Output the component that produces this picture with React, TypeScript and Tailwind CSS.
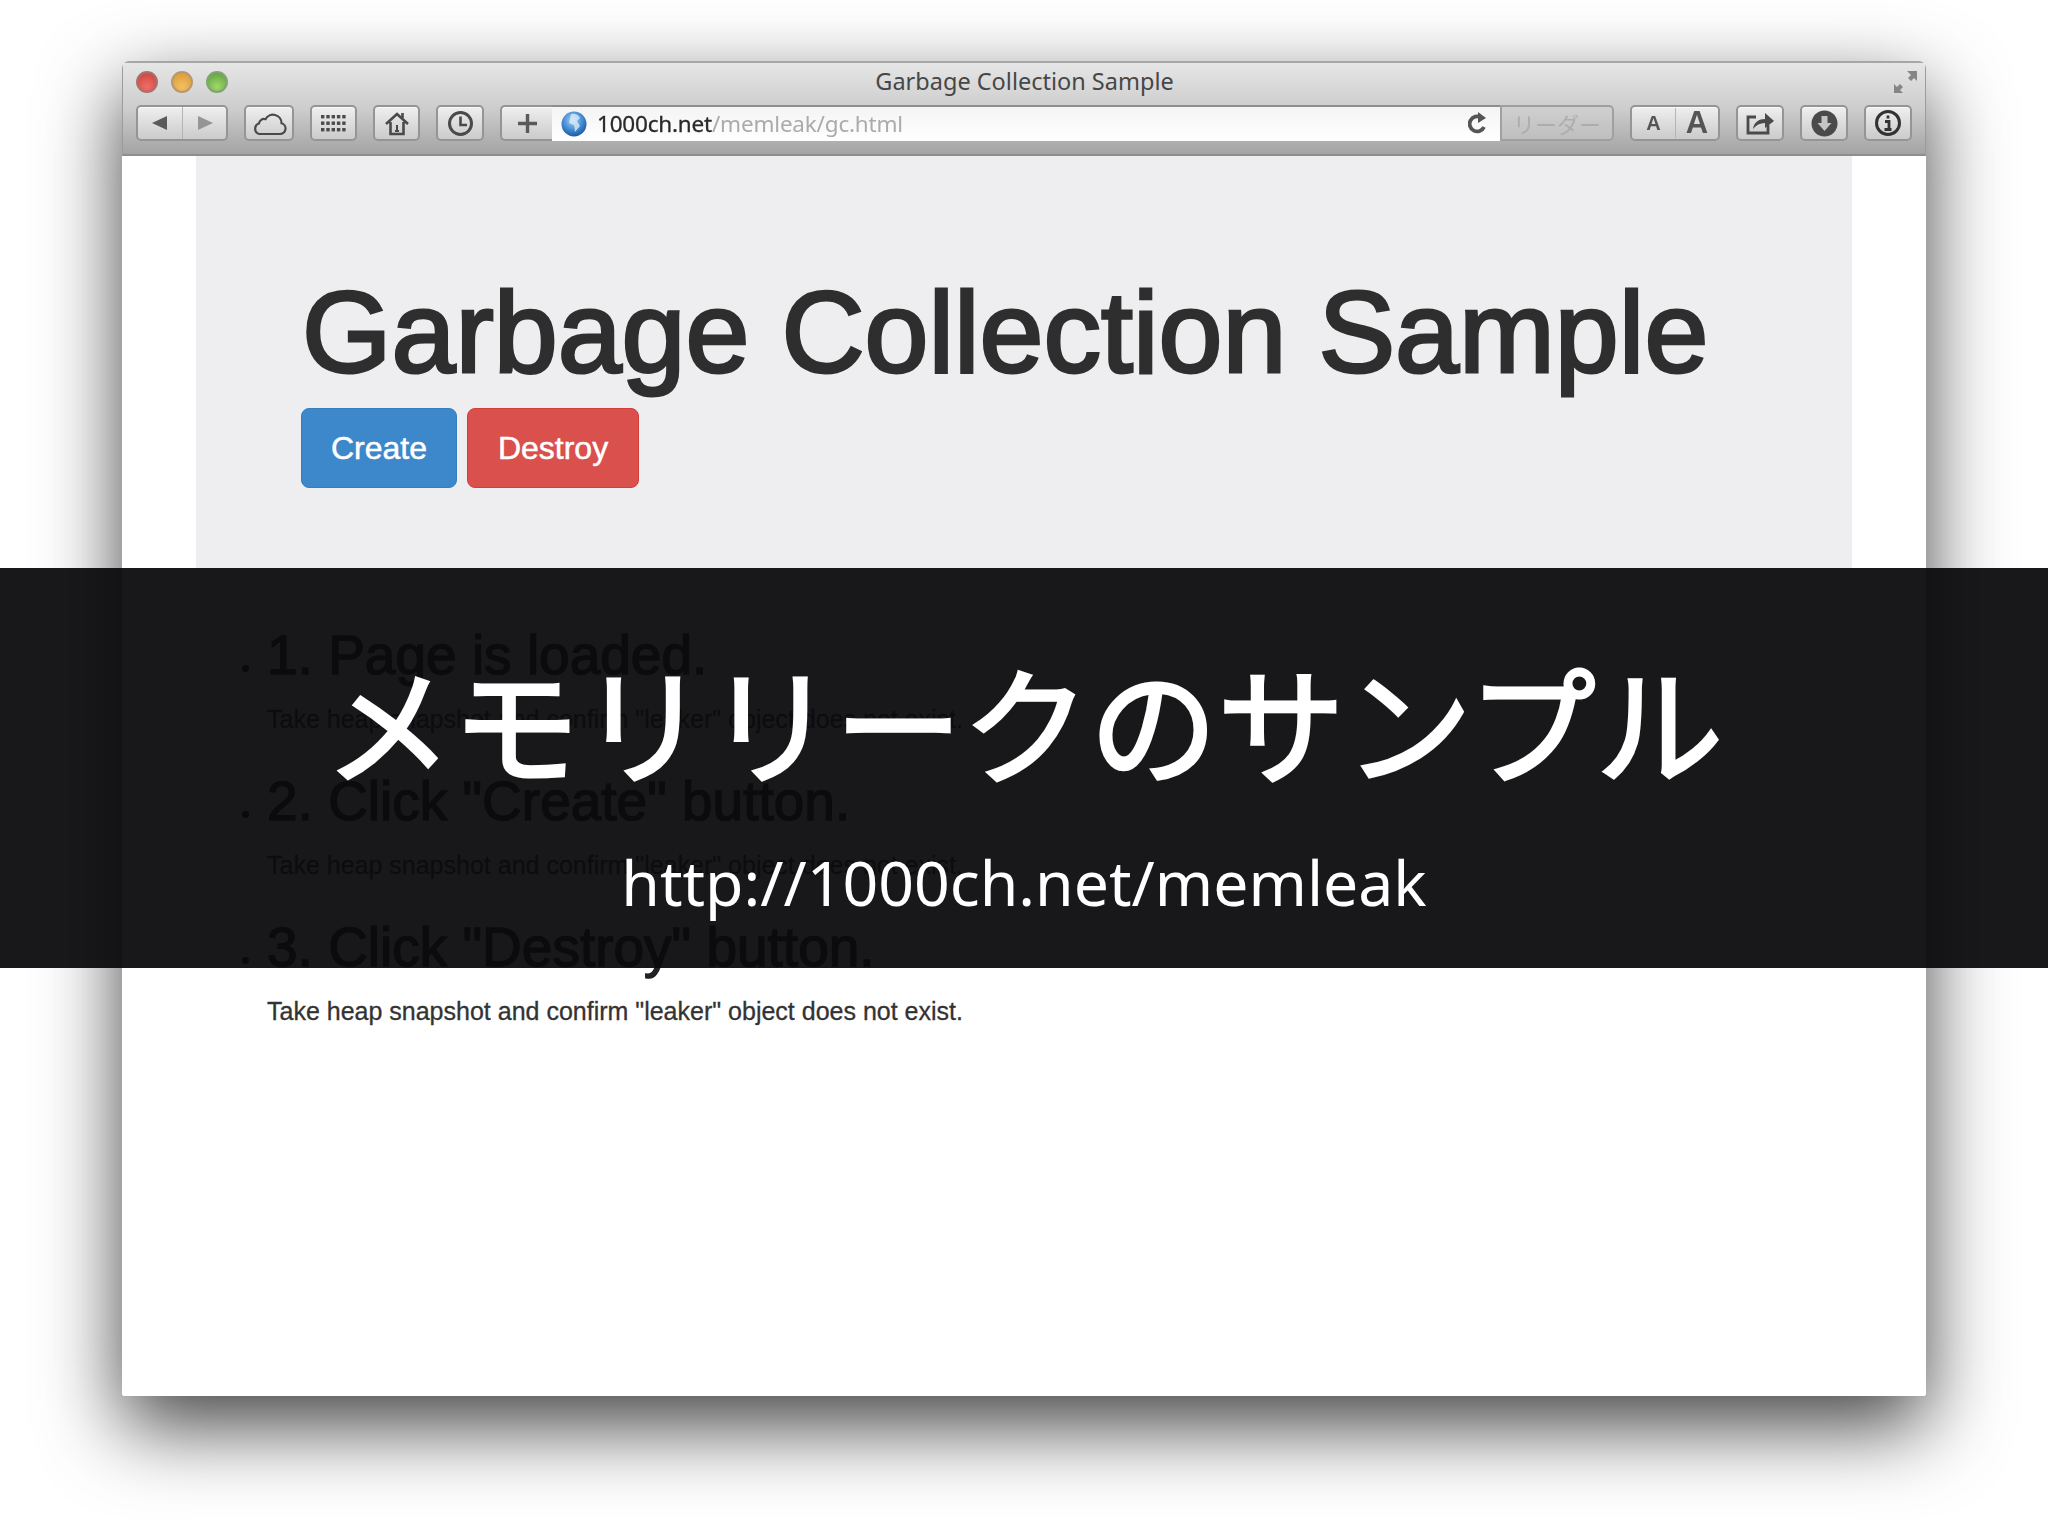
import React from "react";

const sans = "font-['Liberation_Sans',Arial,sans-serif]";
const ui = "font-['Noto_Sans','Open_Sans',sans-serif]";

function Btn({ className = "", children }: { className?: string; children?: React.ReactNode }) {
  return (
    <div className={"h-[36px] flex items-center justify-center rounded-[5px] border-2 border-[#959595] bg-gradient-to-b from-[#efefef] to-[#cbcbcb] shadow-[inset_0_1px_0_#f8f8f8] text-[#4a4a4a] " + className}>
      {children}
    </div>
  );
}

function Light({ from, to, edge }: { from: string; to: string; edge: string }) {
  return (
    <span className="block w-[22px] h-[22px] rounded-full border-2" style={{ background: `radial-gradient(circle at 50% 75%, ${to}, ${from})`, borderColor: edge }} />
  );
}

function Step({ title }: { title: string }) {
  return (
    <li className="flex items-start h-[146px]">
      <span className="block w-[7px] h-[7px] bg-[#111] rounded-full mt-[41px] mr-[18px]" />
      <div>
        <h2 className="text-[55px] leading-[62px] text-[#222] h-[80px] [-webkit-text-stroke:1.5px_#222]">{title}</h2>
        <p className="text-[25px] leading-[30px] text-[#333] [-webkit-text-stroke:0.3px_#333]">Take heap snapshot and confirm "leaker" object does not exist.</p>
      </div>
    </li>
  );
}

export default function App() {
  return (
    <div className="relative w-[2048px] h-[1536px] bg-white overflow-hidden pt-[61px] px-[122px]">
      <div className="h-[1335px] flex flex-col rounded-t-[7px] rounded-b-[3px] bg-white shadow-[0_30px_80px_rgba(0,0,0,0.74)] overflow-hidden blur-[0.5px]">
        {/* Browser chrome */}
        <div className="h-[95px] shrink-0 flex flex-col bg-gradient-to-b from-[#e6e6e6] via-[#cdcdcd] to-[#a4a4a4] border-t-2 border-t-[#a6a6a6] border-b-2 border-b-[#8e8e8e] border-x border-x-[#9c9c9c]">
          <div className="h-[37px] shrink-0 flex items-center px-[13px]">
            <div className="flex gap-[13px]">
              <Light from="#c9403c" to="#ee6f66" edge="#a9716c" />
              <Light from="#d8952f" to="#f4c064" edge="#b39a73" />
              <Light from="#5a9c38" to="#9fd86c" edge="#83a276" />
            </div>
            <div className={ui + " flex-1 text-center text-[23.500px] text-[#474747] -ml-[72px]"}>Garbage Collection Sample</div>
            <svg width="25" height="26" viewBox="0 0 25 26" className="text-[#858585] mr-[-6px]">
              <path d="M14 2h10v10l-3-3-3 3-3-3 3-3z" fill="currentColor" />
              <path d="M1 15l3 3 3-3 3 3-3 3 3 3H1z" fill="currentColor" />
            </svg>
          </div>
          <div className="flex items-center gap-4 px-[13px] mt-[5px]">
            <Btn className="w-[92px] !justify-start">
              <div className="w-[45px] h-full flex items-center justify-center border-r border-r-[#b4b4b4]">
                <svg width="16" height="16" viewBox="0 0 16 16"><path d="M0 8 15 1v14z" fill="#5a5a5a" /></svg>
              </div>
              <div className="flex-1 h-full flex items-center justify-center">
                <svg width="16" height="16" viewBox="0 0 16 16"><path d="M16 8 1 1v14z" fill="#959595" /></svg>
              </div>
            </Btn>
            <Btn className="w-[50px]">
              <svg width="37" height="25" viewBox="0 0 37 25" fill="none" stroke="#4a4a4a" strokeWidth="2.200">
                <path d="M8 23h21a5.500 5.500 0 0 0 1.500-10.800 8.500 8.500 0 0 0-16-4 5 5 0 0 0-6.500 4.300A5.500 5.500 0 0 0 8 23z" />
              </svg>
            </Btn>
            <Btn className="w-[47px]">
              <svg width="25" height="18" viewBox="0 0 25 18" fill="#4a4a4a">
                {[1, 7.500, 14].map((y) => [0, 5.300, 10.600, 15.900, 21.200].map((x) => <rect key={x + "-" + y} x={x} y={y} width="3.400" height="3.400" />))}
              </svg>
            </Btn>
            <Btn className="w-[47px]">
              <svg width="26" height="25" viewBox="0 0 26 25" fill="none" stroke="#4a4a4a" strokeWidth="2.600">
                <path d="M2 13 13 3l11 10M6.500 11v12h13V11M18.500 2v5" />
                <path d="M13 14v6M11 20h4" strokeWidth="2" />
              </svg>
            </Btn>
            <Btn className="w-[48px]">
              <svg width="27" height="27" viewBox="0 0 27 27" fill="none" stroke="#4a4a4a" strokeWidth="3">
                <circle cx="13.500" cy="13.500" r="11" />
                <path d="M13.500 6.500V15H20" strokeWidth="2.600" />
              </svg>
            </Btn>
            {/* Address field */}
            <div className="flex-1 h-[36px] flex">
              <Btn className="w-[52px] rounded-r-none border-r-0">
                <svg width="21" height="21" viewBox="0 0 21 21"><path d="M10.500 1v19M1 10.500h19" stroke="#5a5a5a" strokeWidth="3.400" /></svg>
              </Btn>
              <div className={ui + " flex-1 flex items-center bg-gradient-to-b from-[#f4f4f4] to-white border-t-2 border-t-[#8e8e8e] pl-[9px] pr-[12px]"}>
                <svg width="26" height="26" viewBox="0 0 26 26" className="shrink-0">
                  <defs>
                    <radialGradient id="globe" cx="45%" cy="35%" r="70%">
                      <stop offset="0" stopColor="#a7d2f4" />
                      <stop offset="0.6" stopColor="#3c86d0" />
                      <stop offset="1" stopColor="#1c4e94" />
                    </radialGradient>
                  </defs>
                  <circle cx="13" cy="13" r="12.500" fill="url(#globe)" />
                  <path d="M10 3c4-1 8 1 9 4l-3 3 3 5-5 6-1-7-5-2z" fill="#dfeef8" opacity="0.75" />
                </svg>
                <span className="ml-[10px] text-[22.500px] tracking-[-0.2px] text-[#2a2a2a] [-webkit-text-stroke:0.3px_#2a2a2a]">1000ch.net</span>
                <span className="text-[22.500px] tracking-[-0.2px] text-[#ababab]">/memleak/gc.html</span>
                <svg width="20" height="24" viewBox="0 0 20 24" className="ml-auto shrink-0" fill="none">
                  <path d="M16 15a7.500 7.500 0 1 1-3-9.500" stroke="#555" strokeWidth="3.800" />
                  <path d="M10 0l8 6-8 5z" fill="#555" />
                </svg>
              </div>
              <div className="w-[114px] h-[36px] flex items-center justify-center rounded-r-[5px] border-2 border-[#a0a0a0] bg-gradient-to-b from-[#d0d0d0] to-[#bebebe] text-[#adadad] text-[22px] font-['Noto_Sans_CJK_JP',sans-serif]">
                リーダー
              </div>
            </div>
            <Btn className="w-[90px] !justify-start">
              <div className={sans + " w-[44px] font-bold text-[20px] text-center text-[#555] border-r border-r-[#b4b4b4]"}>A</div>
              <div className={sans + " flex-1 font-bold text-[31px] leading-[32px] text-center text-[#555]"}>A</div>
            </Btn>
            <Btn className="w-[48px]">
              <svg width="30" height="26" viewBox="0 0 30 26" fill="none">
                <path d="M23 15v8H3V7h8" stroke="#4a4a4a" strokeWidth="2.800" />
                <path d="M8 19c1-7 6-10 12-10V3l9 8-9 7v-5c-5 0-9 2-12 6z" fill="#4a4a4a" />
              </svg>
            </Btn>
            <Btn className="w-[48px]">
              <svg width="27" height="27" viewBox="0 0 27 27">
                <circle cx="13.500" cy="13.500" r="13" fill="#4a4a4a" />
                <path d="M10.500 6h6v7h4l-7 8-7-8h4z" fill="#c4c4c4" />
              </svg>
            </Btn>
            <Btn className="w-[48px]">
              <svg width="28" height="28" viewBox="0 0 28 28" fill="none">
                <circle cx="14" cy="14" r="11.500" stroke="#333" strokeWidth="3" />
                <path d="M14 6.500v3M11 12.500h4v8M10.500 20.500h7" stroke="#333" strokeWidth="2.800" />
              </svg>
            </Btn>
          </div>
        </div>

        {/* Page */}
        <div className={sans + " flex-1 bg-white"}>
          <div className="mx-[74px] h-[412px] bg-[#eeeef0] pl-[106px] pt-[106px]">
            <h1 className="text-[115px] leading-[140px] text-[#2e2e2e] whitespace-nowrap [-webkit-text-stroke:3px_#2e2e2e]">Garbage Collection Sample</h1>
            <div className="flex gap-[10px] -ml-[1px] mt-[6px]">
              <div className="w-[156px] h-[80px] rounded-[8px] bg-[#3d88ca] border border-[#357ebd] text-white text-[32px] flex items-center justify-center [-webkit-text-stroke:0.5px_#fff]">Create</div>
              <div className="w-[172px] h-[80px] rounded-[8px] bg-[#d9504c] border border-[#d43f3a] text-white text-[32px] flex items-center justify-center [-webkit-text-stroke:0.5px_#fff]">Destroy</div>
            </div>
          </div>
          <ul className="pl-[120px] pt-[56px]">
            <Step title="1. Page is loaded." />
            <Step title={'2. Click "Create" button.'} />
            <Step title={'3. Click "Destroy" button.'} />
          </ul>
        </div>
      </div>

      {/* Caption band over the screenshot */}
      <div className="absolute inset-x-0 top-[568px] h-[400px] flex flex-col items-center bg-[rgba(10,10,12,0.94)] text-white">
        <div className="mt-[77px] text-[127.500px] leading-[150px] whitespace-nowrap font-['Noto_Sans_CJK_JP',sans-serif] [-webkit-text-stroke:3px_#fff]">メモリリークのサンプル</div>
        <div className="mt-[47px] text-[62.500px] leading-[80px] whitespace-nowrap font-['Noto_Sans',sans-serif]">http://1000ch.net/memleak</div>
      </div>
    </div>
  );
}
